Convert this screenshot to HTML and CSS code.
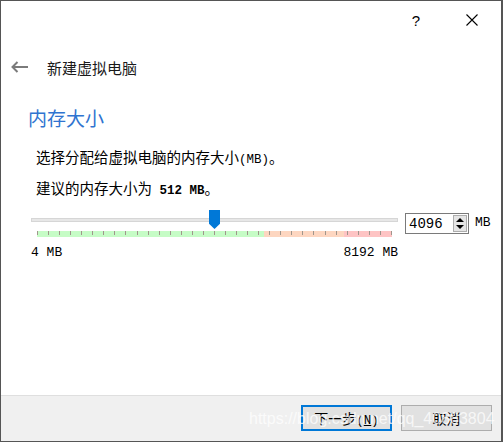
FILE: index.html
```html
<!DOCTYPE html>
<html lang="zh-CN">

<head>
    <meta charset="UTF-8">
    <title>新建虚拟电脑</title>
    <link rel="stylesheet" href="styles.css">
</head>

<body>
    <div class="window">
        <div class="titlebar">
            <span class="help">?</span>
            <span class="close">
                <svg width="12" height="12" viewBox="0 0 12 12">
                    <path d="M0.5 0.5 L11.5 11.5 M11.5 0.5 L0.5 11.5" stroke="#000" stroke-width="1.1" fill="none" />
                </svg>
            </span>
        </div>

        <div class="header">
            <svg class="back" width="18" height="12" viewBox="0 0 18 12">
                <path d="M1.5 6 H17 M6.5 1 L1.5 6 L6.5 11" stroke="#7b7b7b" stroke-width="2" fill="none" />
            </svg>
            <span class="header-title">新建虚拟电脑</span>
        </div>

        <div class="content">
            <h1 class="page-title">内存大小</h1>
            <p class="line">选择分配给虚拟电脑的内存大小<span class="mono">(MB)</span>。</p>
            <p class="line">建议的内存大小为<span class="mono"> </span><b class="mono">512 MB</b>。</p>

            <div class="memory-row">
                <div class="slider">
                    <div class="groove"></div>
                    <div class="handle"></div>
                    <div class="ticks"></div>
                    <div class="limits">
                        <span>4 MB</span>
                        <span>8192 MB</span>
                    </div>
                </div>
                <div class="spinbox">
                    <span class="spin-value">4096</span>
                    <span class="spin-buttons">
                        <span class="spin-up"></span>
                        <span class="spin-down"></span>
                    </span>
                </div>
                <span class="unit">MB</span>
            </div>
        </div>

        <div class="footer">
            <button class="btn default">下一步<span class="mono">(<u>N</u>)</span></button>
            <button class="btn">取消</button>
            <span class="watermark">https://blog.csdn.net/qq_40883804</span>
        </div>
    </div>
</body>

</html>
```

FILE: styles.css
```css
body {
    margin: 0;
    padding: 0;
    font-family: "Noto Sans CJK SC", sans-serif;
    font-size: 14px;
    color: #000;
    background: #fff;
}

.window {
    position: relative;
    width: 503px;
    height: 442px;
    box-sizing: border-box;
    border: 1px solid #555;
    border-right-width: 2px;
    display: flex;
    flex-direction: column;
    background: #fff;
}

.titlebar {
    height: 39px;
    display: flex;
    justify-content: flex-end;
    align-items: center;
    padding-right: 23px;
}

.help {
    font-family: "Liberation Sans", sans-serif;
    font-size: 15px;
    margin-right: 46px;
    margin-top: -1px;
}

.close {
    display: flex;
    margin-top: -2px;
}

.header {
    height: 54px;
    display: flex;
    align-items: center;
    padding-left: 10px;
}

.back {
    display: block;
}

.header-title {
    margin-left: 18px;
    font-size: 15px;
    color: #1a1a1a;
}

.content {
    flex: 1;
    padding-left: 27px;
}

.page-title {
    margin: 12px 0 0 0;
    font-size: 19px;
    line-height: 24px;
    font-weight: normal;
    color: #2f74d0;
}

.line {
    margin: 17px 0 0 8px;
    font-size: 14.5px;
    line-height: 20px;
}

.line + .line {
    margin-top: 8px;
}

.mono {
    font-family: "Liberation Mono", monospace;
    font-size: 12.5px;
}

.memory-row {
    margin-top: 9px;
    margin-left: 3px;
    display: flex;
    align-items: flex-start;
}

.slider {
    position: relative;
    width: 367px;
    height: 52px;
}

.groove {
    margin-top: 8px;
    height: 2px;
    border: 1px solid #d6d6d6;
    background: #e7e7e7;
}

.handle {
    position: absolute;
    left: 178px;
    top: 0;
    width: 11px;
    height: 19px;
    background: #0078d7;
    clip-path: polygon(0 0, 100% 0, 100% 72%, 50% 100%, 0 72%);
}

.ticks {
    margin: 9px 0 0 6px;
    width: 355px;
    height: 6px;
    background:
        repeating-linear-gradient(to right, #a0968c 0 1px, transparent 1px 11.06px) top left / 100% 4px no-repeat,
        linear-gradient(to right, #c6fcc6 0 227px, #fdd6c0 227px 307px, #fec4c4 307px);
}

.limits {
    margin-top: 8px;
    display: flex;
    justify-content: space-between;
    font-family: "Liberation Mono", monospace;
    font-size: 13px;
    line-height: 16px;
}

.spinbox {
    margin: 3px 0 0 7px;
    width: 64px;
    height: 21px;
    box-sizing: border-box;
    border: 1px solid #7a7a7a;
    display: flex;
    align-items: center;
    justify-content: space-between;
    padding: 0 1px 0 3px;
}

.spin-value {
    font-family: "Liberation Mono", monospace;
    font-size: 14px;
}

.spin-buttons {
    width: 14px;
    height: 17px;
    box-sizing: border-box;
    border: 1px solid #adadad;
    background: #e5e5e5;
    display: flex;
    flex-direction: column;
    align-items: center;
    justify-content: space-around;
}

.spin-up,
.spin-down {
    width: 0;
    height: 0;
    border-left: 4px solid transparent;
    border-right: 4px solid transparent;
}

.spin-up {
    border-bottom: 4px solid #000;
}

.spin-down {
    border-top: 4px solid #000;
}

.unit {
    margin: 5px 0 0 6px;
    font-family: "Liberation Mono", monospace;
    font-size: 13px;
    line-height: 16px;
}

.footer {
    position: relative;
    height: 46px;
    box-sizing: border-box;
    border-top: 1px solid #dfdfdf;
    background: #f0f0f0;
    display: flex;
    justify-content: flex-end;
    align-items: flex-start;
    gap: 9px;
    padding: 9px 9px 0 0;
}

.btn {
    width: 91px;
    height: 26px;
    box-sizing: border-box;
    border: 1px solid #adadad;
    background: #e1e1e1;
    font-family: "Noto Sans CJK SC", sans-serif;
    font-size: 14px;
    color: #000;
    padding: 0;
}

.btn.default {
    border: 2px solid #0078d7;
}

.watermark {
    position: absolute;
    left: 248px;
    top: 14px;
    font-family: "Liberation Sans", sans-serif;
    font-size: 16px;
    color: rgba(255, 255, 255, 0.75);
    pointer-events: none;
}
```
